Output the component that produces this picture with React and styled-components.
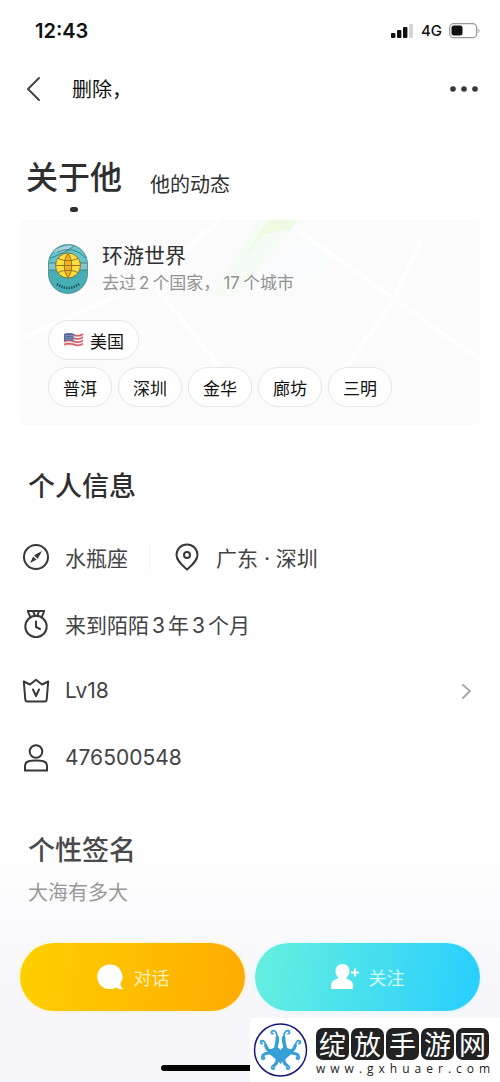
import React from 'react'
import styled, { createGlobalStyle } from 'styled-components'

const GlobalStyle = createGlobalStyle`
  * {
    box-sizing: border-box;
  }

  body {
    margin: 0;
    background: #fff;
    color: #2f2f31;
    font-family: Inter, 'Noto Sans CJK SC', sans-serif;
  }

  button {
    border: 0;
    padding: 0;
    background: none;
    color: inherit;
    font: inherit;
    cursor: pointer;
  }

  svg {
    display: block;
    flex: none;
  }
`

const Page = styled.div`
  position: relative;
  min-height: 100vh;
  display: flex;
  flex-direction: column;
`

const StatusBar = styled.div`
  display: flex;
  align-items: center;
  justify-content: space-between;
  height: 61px;
  padding: 0 19px 0 35px;
  color: #111;
`

const Clock = styled.time`
  font-size: 20px;
  font-weight: 600;
`

const Indicators = styled.div`
  display: flex;
  align-items: center;
  gap: 7px;
  font-size: 15px;
  font-weight: 500;
`

const NavBar = styled.header`
  display: flex;
  align-items: center;
  height: 55px;
  padding: 0 20px 0 24px;
`

const UserName = styled.h1`
  flex: 1;
  margin: 0 0 0 28px;
  font-size: 20px;
  font-weight: 400;
  color: #111;
`

const Tabs = styled.nav`
  display: flex;
  align-items: flex-start;
  gap: 28px;
  padding: 38px 26px 0;
`

const Tab = styled.button`
  display: flex;
  flex-direction: column;
  align-items: center;
  font-size: ${({ $active }) => ($active ? 32 : 20)}px;
  font-weight: ${({ $active }) => ($active ? 500 : 400)};
  line-height: ${({ $active }) => ($active ? 48 : 62)}px;
`

const TabDot = styled.span`
  width: 8px;
  height: 5px;
  margin-top: 5px;
  border-radius: 3px;
  background: #2f2f31;
`

const TravelCard = styled.section`
  position: relative;
  margin: 4px 20px 0;
  padding: 22px 28px 18px;
  border-radius: 6px;
  background: #fbfbfb;
  overflow: hidden;
`

const MapArt = styled.svg`
  position: absolute;
  top: 0;
  left: 0;
  width: 100%;
  height: 100%;
`

const TravelHead = styled.div`
  position: relative;
  display: flex;
  align-items: center;
  gap: 14px;
  margin-bottom: 24px;
`

const TravelTitle = styled.h2`
  margin: 0;
  font-size: 21px;
  font-weight: 400;
  line-height: 28px;
`

const TravelText = styled.p`
  margin: 0;
  font-size: 17px;
  line-height: 26px;
  color: #919191;
`

const Num = styled.span`
  margin: 0 3px;
`

const Tags = styled.ul`
  position: relative;
  display: flex;
  flex-wrap: wrap;
  gap: 6px;
  margin: 0 0 7px;
  padding: 0;
  list-style: none;

  &:last-child {
    margin-bottom: 0;
  }
`

const Tag = styled.li`
  display: flex;
  align-items: center;
  gap: 6px;
  height: 40px;
  padding: 0 14px;
  border: 1px solid #e6e6e6;
  border-radius: 20px;
  background: #fff;
  font-size: 17px;
  color: #111;
`

const Section = styled.section`
  padding: 42px 28px 0;
`

const SectionTitle = styled.h2`
  margin: 0;
  font-size: 27px;
  font-weight: 500;
  line-height: 40px;
`

const InfoList = styled.div`
  margin: 16px -6px 0;
`

const InfoRow = styled.div`
  display: flex;
  align-items: center;
  width: 100%;
  height: 67px;
  font-size: 21px;
  color: #434345;
`

const InfoItem = styled.div`
  display: flex;
  align-items: center;
  gap: 15px;
  color: #434345;

  & + & {
    margin-left: 21px;
    padding-left: 23px;
    border-left: 1px solid #f5f5f5;
  }
`

const Chevron = styled.svg`
  margin-left: auto;
`

const Bottom = styled.div`
  flex: 1;
  display: flex;
  flex-direction: column;
  background: linear-gradient(#fff 0, #fff 50px, #f7f7fb 200px, #f6f6fa);
`

const Signature = styled.section`
  padding: 40px 28px 0;
  color: #4a4a4c;
`

const SignatureText = styled.p`
  margin: 7px 0 0;
  font-size: 20px;
  line-height: 30px;
  color: #98989a;
`

const Actions = styled.div`
  display: flex;
  gap: 10px;
  padding: 35px 20px 0;
`

const ActionButton = styled.button`
  flex: 1;
  display: flex;
  align-items: center;
  justify-content: center;
  gap: 10px;
  height: 68px;
  border-radius: 34px;
  background: linear-gradient(100deg, ${({ $from }) => $from}, ${({ $to }) => $to});
  box-shadow: 0 0 5px ${({ $glow }) => $glow};
  font-size: 18px;
  color: ${({ $ink }) => $ink};
`

const HomeBar = styled.div`
  width: 178px;
  height: 6px;
  margin: auto auto 11px;
  border-radius: 3px;
  background: #050505;
`

const SiteMark = styled.a`
  position: absolute;
  right: 0;
  bottom: 0;
  display: flex;
  align-items: center;
  gap: 8px;
  width: 250px;
  height: 64px;
  padding-left: 3px;
  background: #fff;
  color: #222;
  text-decoration: none;
`

const SiteName = styled.div`
  display: flex;
  gap: 2px;
  margin-top: 6px;
`

const Stamp = styled.span`
  width: 33px;
  height: 32px;
  border-radius: 7px;
  background: #222;
  font-family: 'Noto Sans CJK SC', sans-serif;
  font-size: 27px;
  line-height: 32px;
  text-align: center;
  color: #fff;
`

const SiteUrl = styled.div`
  font-family: 'Open Sans', sans-serif;
  font-size: 12px;
  font-weight: 500;
  line-height: 18px;
  letter-spacing: 5px;
`

const line = {
  fill: 'none',
  stroke: '#38383a',
  strokeWidth: 2,
  strokeLinecap: 'round',
  strokeLinejoin: 'round',
}

const BackIcon = () => (
  <svg width="20" height="26" viewBox="0 0 20 26" {...line} stroke="#444">
    <path d="M15 2 4 13l11 11" />
  </svg>
)

const MoreIcon = () => (
  <svg width="32" height="8" viewBox="0 0 32 8" fill="#38383a">
    <circle cx="5" cy="4" r="2.8" />
    <circle cx="16" cy="4" r="2.8" />
    <circle cx="27" cy="4" r="2.8" />
  </svg>
)

const SignalIcon = () => (
  <svg width="23" height="14" viewBox="0 0 23 14" fill="#111">
    <rect x="0" y="9" width="4.4" height="5" rx="1" />
    <rect x="6" y="6" width="4.4" height="8" rx="1" />
    <rect x="12" y="3" width="4.4" height="11" rx="1" />
    <rect x="18" y="0" width="4" height="14" rx="1" fill="#d4d4d4" />
  </svg>
)

const BatteryIcon = () => (
  <svg width="32" height="16" viewBox="0 0 32 16">
    <rect x="0.7" y="0.7" width="27" height="14" rx="4" fill="none" stroke="#999" strokeWidth="1.3" />
    <rect x="2.5" y="2.6" width="11" height="10" rx="2.5" fill="#111" />
    <path d="M29.5 5.5q2 2.3 0 4.6z" fill="#999" />
  </svg>
)

const TravelBadge = () => (
  <svg width="40" height="50" viewBox="0 0 40 50">
    <defs>
      <clipPath id="badge">
        <rect x="0.5" y="0.5" width="39" height="49" rx="19.5" />
      </clipPath>
    </defs>
    <g clipPath="url(#badge)">
      <rect width="40" height="50" fill="#48aeb5" />
      <path d="M0 14Q12 1 24 0h16v22H0z" fill="#65c5ca" />
      <path d="M4 8Q16 0 26 2L15 8z" fill="#a9ced8" />
      <path d="M0 19h40v7H0z" fill="#83c6cb" />
      <path d="M0 15Q20 8 28 0M0 19h40M0 26h40M9 8Q25 1 38 14" fill="none" stroke="#35717a" strokeWidth="0.8" />
      <circle cx="20" cy="21.5" r="12.5" fill="#ffdf3e" stroke="#775f28" strokeWidth="0.8" />
      <path d="M20 9.5c-5 6-5 18 0 24 5-6 5-18 0-24" fill="#f5b020" />
      <path
        d="M7.5 21.5h25M20 9.5c-5 6-5 18 0 24M20 9.5c5 6 5 18 0 24M10 14.5q10 4.5 20 0M10 28.5q10-4.5 20 0"
        fill="none"
        stroke="#8a6d28"
        strokeWidth="0.9"
      />
      <path d="M9 40q11 8 22 0" fill="none" stroke="#1d525b" strokeWidth="2.6" strokeDasharray="1.3 1.2" />
    </g>
    <rect x="0.5" y="0.5" width="39" height="49" rx="19.5" fill="none" stroke="#46858b" strokeWidth="0.8" />
  </svg>
)

const FlagIcon = () => (
  <svg width="21" height="16" viewBox="0 0 21 16">
    <path d="M1 2q5-2 10 0t9-1v12q-5 2-9 1t-10 1z" fill="#f3e8ea" />
    <path
      d="M1 3q5-2 10 0t9-1M1 6.2q5-2 10 0t9-1M1 9.4q5-2 10 0t9-1M1 12.6q5-2 10 0t9-1"
      fill="none"
      stroke="#d4616b"
      strokeWidth="1.6"
    />
    <path d="M1 2q5-2 9.5-.3v7.2Q6 7.5 1 9z" fill="#526a9c" />
    <path d="M2.5 3.5h7M2.5 5.5h7M2.5 7.3h7" stroke="#b8c3da" strokeWidth="0.8" strokeDasharray="1 1" />
  </svg>
)

const CompassIcon = () => (
  <svg width="28" height="28" viewBox="0 0 28 28" {...line}>
    <circle cx="14" cy="14" r="12" />
    <path d="m20 8-8 4.2 3.7 3.6zM8 20l3.2-6.5 3.2 3.2z" fill="#38383a" stroke="none" />
  </svg>
)

const PinIcon = () => (
  <svg width="28" height="28" viewBox="0 0 28 28" {...line}>
    <path d="M14 26.5C9.5 22.5 3.5 18 3.5 11.8a10.5 10.3 0 0 1 21 0C24.5 18 18.5 22.5 14 26.5z" />
    <circle cx="14" cy="12" r="3" />
  </svg>
)

const MedalIcon = () => (
  <svg width="28" height="28" viewBox="0 0 28 28" {...line}>
    <circle cx="14" cy="16.5" r="10.7" />
    <path d="M8 6.5 5.8 1h16.4L20 6.500M11 1l2 4.8M17 1l-1.5 4.8" />
    <path d="M14 11.5V17l4 2" />
  </svg>
)

const CrownIcon = () => (
  <svg width="28" height="28" viewBox="0 0 28 28" {...line}>
    <path d="M1.8 4.5 8 7.5l6-4.7 6 4.7 6.2-3-1.5 18q-.2 2-2.2 2h-17q-2 0-2.2-2z" />
    <path d="m11 12.5 3 6.5 3-6.5" />
  </svg>
)

const PersonIcon = () => (
  <svg width="28" height="28" viewBox="0 0 28 28" {...line}>
    <circle cx="14" cy="7.5" r="6.3" />
    <path d="M3 26.5v-4.3q0-4.7 6-5.4 5-.7 10 0 6 .7 6 5.4v4.3z" strokeLinejoin="miter" />
  </svg>
)

const ChatIcon = () => (
  <svg width="28" height="28" viewBox="0 0 28 28" fill="#fff">
    <path d="M13.5 1.5a12.3 12.3 0 1 0 6.3 22.9q3.2 2.4 7.2 1.6-2.7-2-2.6-5.4A12.3 12.3 0 0 0 13.5 1.5z" />
  </svg>
)

const FollowIcon = () => (
  <svg width="28" height="28" viewBox="0 0 28 28" fill="#fff">
    <path d="M11.5 1C7 1 4.500 4.200 4.500 8.200c0 2.600 1 4.800 2.700 6.200-.3 1-1 1.400-2.700 2-3 1-4.500 2.700-4.500 6.200V26h22v-3.400c0-3.500-1.500-5.200-4.500-6.200-1.700-.6-2-1-2.200-2 2.200-1.400 3.200-3.600 3.200-6.200C18.500 4.200 16 1 11.500 1z" />
    <path d="M24 5.500v8M20 9.500h8" stroke="#fff" strokeWidth="1.8" />
  </svg>
)

const Tentacles = props => (
  <g fill="none" stroke="#369fd8" strokeLinecap="round" {...props}>
    <path d="M22.5 28c.5-5 2.500-8.500 1.800-12.500" strokeWidth="3.6" />
    <path d="M24.3 15.500c-.3-3-1.100-6.300-3.600-6.800-2.500-.3-3 3-.8 3" strokeWidth="1.8" />
    <path d="M18 29.500c-3-.7-4.500-3-5.300-6" strokeWidth="3.2" />
    <path d="M12.700 23.500c-.6-3-1.600-4.600-3.400-4.800-2.200 0-2.200 3-.2 2.800" strokeWidth="1.8" />
    <path d="M18 31c-3.500-.4-6 0-8 2" strokeWidth="3" />
    <path d="M10 33c-1.800 1.800-1.800 4 0 4.200 1.700 0 2-2.200.5-2.200" strokeWidth="1.8" />
    <path d="M24 36c.5 3.500-.5 5.800-2.500 7" strokeWidth="3.2" />
    <path d="M21.5 43c-2.500.6-3.500 2-2.500 3.600 1.300 1.200 3-.4 2-1.600" strokeWidth="1.8" />
  </g>
)

const OctopusLogo = () => (
  <svg width="55" height="56" viewBox="0 0 55 56">
    <circle cx="27.5" cy="28" r="26" fill="#fff" stroke="#15157a" strokeWidth="1.5" />
    <path
      d="M27.5 28c-1.500-2.500-3.500-3.500-5.500-3-2 1.500-4 2.500-7 2.500 0 6 8 8 12.500 14.500C32 35.500 40 33.500 40 27.500c-3 0-5-1-7-2.500-2-.5-4 .5-5.500 3z"
      fill="#369fd8"
    />
    <Tentacles />
    <Tentacles transform="matrix(-1 0 0 1 55 0)" />
  </svg>
)

const cities = ['普洱', '深圳', '金华', '廊坊', '三明']

export default function App() {
  return (
    <Page>
      <GlobalStyle />
      <StatusBar>
        <Clock>12:43</Clock>
        <Indicators>
          <SignalIcon />
          4G
          <BatteryIcon />
        </Indicators>
      </StatusBar>

      <NavBar>
        <button aria-label="返回">
          <BackIcon />
        </button>
        <UserName>删除，</UserName>
        <button aria-label="更多">
          <MoreIcon />
        </button>
      </NavBar>

      <Tabs>
        <Tab $active>
          关于他
          <TabDot />
        </Tab>
        <Tab>他的动态</Tab>
      </Tabs>

      <TravelCard>
        <MapArt viewBox="0 0 460 205" preserveAspectRatio="none" aria-hidden="true">
          <path d="M190 76 238 0h42L216 76z" fill="#f5fcf6" />
          <path d="M226 34 248 0h30l-8 9-28 6-16 22z" fill="#effae2" />
          <path d="M222 62 290 14l22 24-12 18-70 18z" fill="#f8fcfc" />
          <path
            d="M280 12 460 140M400 22 374 80 320 156M0 120l130-60 70-60M130 60l80 100"
            fill="none"
            stroke="#fefefe"
            strokeWidth="5"
          />
        </MapArt>
        <TravelHead>
          <TravelBadge />
          <div>
            <TravelTitle>环游世界</TravelTitle>
            <TravelText>
              去过<Num>2</Num>个国家，<Num>17</Num>个城市
            </TravelText>
          </div>
        </TravelHead>
        <Tags>
          <Tag>
            <FlagIcon />
            美国
          </Tag>
        </Tags>
        <Tags>
          {cities.map(city => (
            <Tag key={city}>{city}</Tag>
          ))}
        </Tags>
      </TravelCard>

      <Section>
        <SectionTitle>个人信息</SectionTitle>
        <InfoList>
          <InfoRow>
            <InfoItem>
              <CompassIcon />
              水瓶座
            </InfoItem>
            <InfoItem>
              <PinIcon />
              广东 · 深圳
            </InfoItem>
          </InfoRow>
          <InfoRow>
            <InfoItem>
              <MedalIcon />
              <span>
                来到陌陌<Num>3</Num>年<Num>3</Num>个月
              </span>
            </InfoItem>
          </InfoRow>
          <InfoRow as="button">
            <InfoItem>
              <CrownIcon />
              Lv18
            </InfoItem>
            <Chevron width="20" height="20" viewBox="0 0 20 20" {...line} stroke="#aaa">
              <path d="m5 4 7 6-7 7" />
            </Chevron>
          </InfoRow>
          <InfoRow>
            <InfoItem>
              <PersonIcon />
              476500548
            </InfoItem>
          </InfoRow>
        </InfoList>
      </Section>

      <Bottom>
        <Signature>
          <SectionTitle>个性签名</SectionTitle>
          <SignatureText>大海有多大</SignatureText>
        </Signature>
        <Actions>
          <ActionButton $from="#ffd000" $to="#ffab00" $glow="#fff0bd" $ink="#fff2bb">
            <ChatIcon />
            对话
          </ActionButton>
          <ActionButton $from="#66f0df" $to="#28ceff" $glow="#d5fbff" $ink="#d2fbff">
            <FollowIcon />
            关注
          </ActionButton>
        </Actions>
        <HomeBar />
      </Bottom>

      <SiteMark href="#">
        <OctopusLogo />
        <div>
          <SiteName>
            {[...'绽放手游网'].map(char => (
              <Stamp key={char}>{char}</Stamp>
            ))}
          </SiteName>
          <SiteUrl>www.gxhuaer.com</SiteUrl>
        </div>
      </SiteMark>
    </Page>
  )
}
